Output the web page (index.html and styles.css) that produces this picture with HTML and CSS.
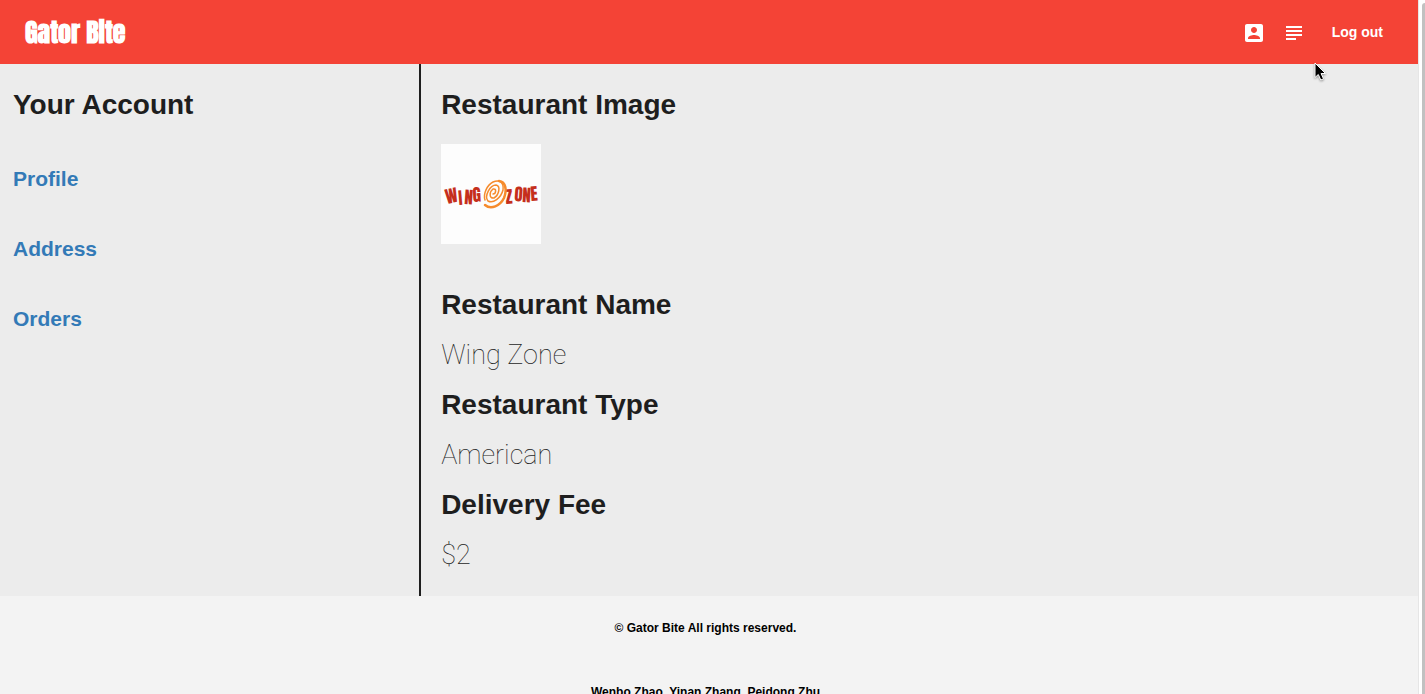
FILE: index.html
```html
<!DOCTYPE html>
<html lang="en">
<head>
<meta charset="utf-8">
<title>Gator Bite</title>
<link rel="stylesheet" href="styles.css">
</head>
<body>
<div class="viewport">
  <div class="page">
    <header class="topbar">
      <a class="brand" href="#">Gator Bite</a>
      <nav class="actions">
        <button class="icon-button" type="button" aria-label="Account">
          <svg width="24" height="24" viewBox="0 0 24 24" fill="currentColor"><path d="M3 5v14c0 1.100.89 2 2 2h14c1.100 0 2-.9 2-2V5c0-1.100-.9-2-2-2H5c-1.110 0-2 .9-2 2zm12 4c0 1.660-1.340 3-3 3s-3-1.340-3-3 1.340-3 3-3 3 1.340 3 3zm-9 8c0-2 4-3.100 6-3.100s6 1.100 6 3.100v1H6v-1z"/></svg>
        </button>
        <button class="icon-button" type="button" aria-label="Orders">
          <svg width="24" height="24" viewBox="0 0 24 24" fill="currentColor"><path d="M4 5h16v2H4zM4 9h16v2H4zM4 13h16v2H4zM4 17h10v2H4z"/></svg>
        </button>
        <button class="logout" type="button">Log out</button>
      </nav>
    </header>
    <div class="content">
      <aside class="sidebar">
        <h1 class="heading">Your Account</h1>
        <nav class="menu">
          <a href="#">Profile</a>
          <a href="#">Address</a>
          <a href="#">Orders</a>
        </nav>
      </aside>
      <main class="details">
        <h2 class="heading">Restaurant Image</h2>
        <svg class="logo" width="100" height="100" viewBox="0 0 100 100" role="img" aria-label="Wing Zone">
          <g class="logo-text">
            <text x="6 18 23 32" y="60 61 60 58" rotate="-12 -5 4 -3">WING</text>
            <text x="65 73 81 90" y="60 57 58 57" rotate="-4 4 3 -4">ZONE</text>
          </g>
          <g class="logo-swirl">
            <path d="M44 56C42 50 46 41 52 38C59 35 63 39 62 46C60 54 52 60 47 57C43 52 49 41 55 41C60 42 58 51 53 54C48 55 48 48 52 45C56 44 55 50 52 50"/>
            <path class="logo-rim" d="M44 61C50 66 59 62 63 54C66 46 65 38 58 37"/>
          </g>
        </svg>
        <h2 class="heading">Restaurant Name</h2>
        <p class="value">Wing Zone</p>
        <h2 class="heading">Restaurant Type</h2>
        <p class="value">American</p>
        <h2 class="heading">Delivery Fee</h2>
        <p class="value">$2</p>
      </main>
    </div>
    <footer class="footer">
      <p>© Gator Bite All rights reserved.</p>
      <p>Wenbo Zhao, Yinan Zhang, Peidong Zhu</p>
    </footer>
  </div>
  <div class="scroll-track"><div class="scroll-thumb"></div></div>
  <svg class="pointer" width="16" height="22" viewBox="0 0 16 22"><path d="M2 1V15.500L5.300 12.500L7.800 18L10.500 16.800L8.100 11.500H12.500Z"/></svg>
</div>
</body>
</html>
```
FILE: styles.css
```css
* {
  box-sizing: border-box;
}

body {
  margin: 0;
  font-family: "Liberation Sans", Arial, sans-serif;
  color: #1e1e1e;
  background: #fff;
}

.viewport {
  position: relative;
  display: flex;
  height: 100vh;
  overflow: hidden;
}

.page {
  flex: 1;
  overflow: hidden;
  background: #f3f3f3;
}

.topbar {
  display: flex;
  align-items: center;
  justify-content: space-between;
  height: 64px;
  padding: 0 23px 0 25px;
  background: #f44336;
  color: #fff;
}

.brand {
  color: #fff;
  font-family: Impact, Anton, "Roboto Condensed", "Open Sans Condensed", Roboto, sans-serif;
  font-size: 26px;
  font-weight: 700;
  text-decoration: none;
}

.actions {
  display: flex;
  align-items: center;
}

.icon-button,
.logout {
  border: 0;
  padding: 8px;
  background: none;
  color: inherit;
  cursor: pointer;
}

.icon-button {
  padding-top: 10px;
}

.icon-button svg {
  display: block;
}

.logout {
  margin-left: 6px;
  padding: 8px 12px;
  font: 700 14px "Liberation Sans", Arial, sans-serif;
}

.content {
  display: flex;
  background: #ececec;
}

.sidebar {
  flex: 0 0 29.700%;
  padding: 16px 13px;
  border-right: 2px solid #1e1e1e;
}

.heading {
  margin: 0;
  font-size: 28px;
  font-weight: 700;
  line-height: 50px;
}

.menu {
  display: flex;
  flex-direction: column;
  margin-top: 14px;
}

.menu a {
  color: #337ab7;
  font-size: 21px;
  font-weight: 700;
  line-height: 70px;
  text-decoration: none;
}

.details {
  flex: 1;
  padding: 16px 20px;
}

.logo {
  display: block;
  margin: 14px 0 36px;
  background: #fdfdfd;
}

.logo-text {
  fill: #c52f1c;
  font-family: Impact, Anton, "Roboto Condensed", Roboto, sans-serif;
  font-size: 17px;
  font-weight: 400;
}

.logo-swirl {
  fill: none;
  stroke: #f68b2c;
  stroke-width: 1.500;
  stroke-linecap: round;
}

.logo-rim {
  stroke-width: 2.500;
}

.value {
  margin: 0;
  font-family: Roboto, Inter, sans-serif;
  font-size: 27px;
  font-weight: 100;
  line-height: 50px;
}

.footer {
  padding: 0 7px 0 0;
  color: #000;
  font-size: 12px;
  font-weight: 700;
  text-align: center;
}

.footer p {
  margin: 0;
  line-height: 64px;
}

.scroll-track {
  flex: 0 0 7px;
  padding: 3px 0 0 3px;
  border-left: 1px solid #e6e6e6;
  background: #fff;
}

.scroll-thumb {
  height: 100%;
  border-radius: 3px 0 0 0;
  background: #c1c1c1;
}

.pointer {
  position: absolute;
  top: 62px;
  left: 1313px;
  fill: #000;
  stroke: #fff;
  stroke-width: 1;
  filter: drop-shadow(0 1px 1px rgba(0, 0, 0, 0.400));
}
```
